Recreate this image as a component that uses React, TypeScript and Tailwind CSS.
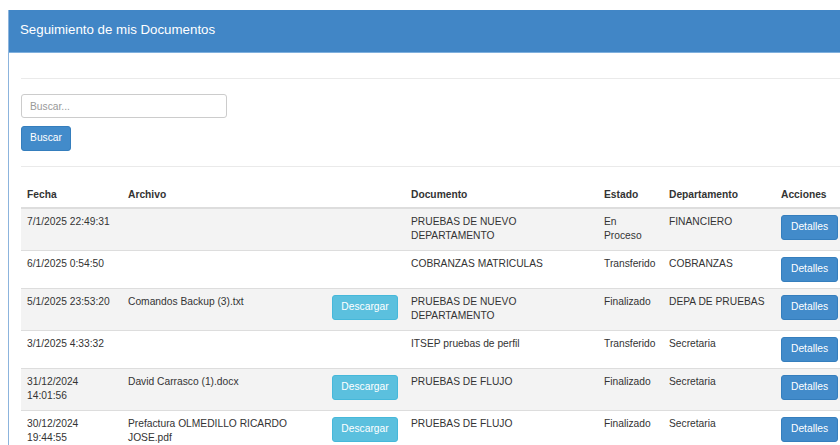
import clsx from 'clsx';

interface DocRow {
	fecha: string;
	archivo?: string;
	documento: string;
	estado: string;
	departamento: string;
}

const rows: DocRow[] = [
	{
		fecha: '7/1/2025 22:49:31',
		documento: 'PRUEBAS DE NUEVO DEPARTAMENTO',
		estado: 'En Proceso',
		departamento: 'FINANCIERO'
	},
	{
		fecha: '6/1/2025 0:54:50',
		documento: 'COBRANZAS MATRICULAS',
		estado: 'Transferido',
		departamento: 'COBRANZAS'
	},
	{
		fecha: '5/1/2025 23:53:20',
		archivo: 'Comandos Backup (3).txt',
		documento: 'PRUEBAS DE NUEVO DEPARTAMENTO',
		estado: 'Finalizado',
		departamento: 'DEPA DE PRUEBAS'
	},
	{
		fecha: '3/1/2025 4:33:32',
		documento: 'ITSEP pruebas de perfil',
		estado: 'Transferido',
		departamento: 'Secretaria'
	},
	{
		fecha: '31/12/2024 14:01:56',
		archivo: 'David Carrasco (1).docx',
		documento: 'PRUEBAS DE FLUJO',
		estado: 'Finalizado',
		departamento: 'Secretaria'
	},
	{
		fecha: '30/12/2024 19:44:55',
		archivo: 'Prefactura OLMEDILLO RICARDO JOSE.pdf',
		documento: 'PRUEBAS DE FLUJO',
		estado: 'Finalizado',
		departamento: 'Secretaria'
	}
];

const cell = 'px-[6px] pt-[6px] pb-[6px] align-top';
const head = 'px-[6px] pt-[8px] pb-[4px] font-bold';

export default function App() {
	return (
		<div className="h-screen overflow-hidden bg-white pt-[10px] pl-[8px] font-['Liberation_Sans',Arial,sans-serif] text-[10.25px] leading-[14.5px] text-[#333]">
			<div className="w-[870px] border-l border-[#8cb4dd]">
				<div className="flex h-[43px] items-center border-b border-[#7fb0de] bg-[#4186c6] pl-[11px] pb-[1px] text-[13.3px] text-white">
					Seguimiento de mis Documentos
				</div>

				<div className="pl-[12px] pt-[25px]">
					<hr className="border-t border-[#eaeaea]" />

					<div className="mt-[15px] flex flex-col items-start gap-[8px]">
						<input
							type="text"
							placeholder="Buscar..."
							className="h-[24px] w-[206px] rounded-[3px] border border-[#ccc] px-[8px] text-[10.25px] text-[#555] outline-none placeholder:text-[#999]"
						/>
						<button
							type="button"
							className="h-[25px] w-[50px] rounded-[3px] border border-[#357ebd] bg-[#428bca] text-[10.25px] text-white"
						>
							Buscar
						</button>
					</div>

					<hr className="mt-[15px] border-t border-[#eaeaea]" />

					<table className="mt-[13px] table-fixed border-collapse text-left">
						<colgroup>
							<col className="w-[101px]" />
							<col className="w-[204px]" />
							<col className="w-[79px]" />
							<col className="w-[193px]" />
							<col className="w-[65px]" />
							<col className="w-[112px]" />
							<col className="w-[95px]" />
						</colgroup>
						<thead>
							<tr className="border-b-2 border-[#ddd]">
								<th className={head}>Fecha</th>
								<th className={head}>Archivo</th>
								<th className={head} />
								<th className={head}>Documento</th>
								<th className={head}>Estado</th>
								<th className={head}>Departamento</th>
								<th className={head}>Acciones</th>
							</tr>
						</thead>
						<tbody>
							{rows.map((row, i) => (
								<tr
									key={row.fecha}
									className={clsx(
										'border-t border-[#ddd]',
										i % 2 === 0 ? 'bg-[#f3f3f3]' : 'bg-white'
									)}
								>
									<td className={cell}>{row.fecha}</td>
									<td className={cell}>{row.archivo}</td>
									<td className={cell}>
										{row.archivo && (
											<button
												type="button"
												className="h-[25px] w-[66px] rounded-[3px] border border-[#46b8da] bg-[#5bc0de] text-[10.25px] text-white"
											>
												Descargar
											</button>
										)}
									</td>
									<td className={cell}>{row.documento}</td>
									<td className="pl-[6px] pr-[7px] py-[6px] align-top">{row.estado}</td>
									<td className={cell}>{row.departamento}</td>
									<td className={cell}>
										<button
											type="button"
											className="h-[25px] w-[57px] rounded-[3px] border border-[#357ebd] bg-[#428bca] text-[10.25px] text-white"
										>
											Detalles
										</button>
									</td>
								</tr>
							))}
						</tbody>
					</table>
				</div>
			</div>
		</div>
	);
}
